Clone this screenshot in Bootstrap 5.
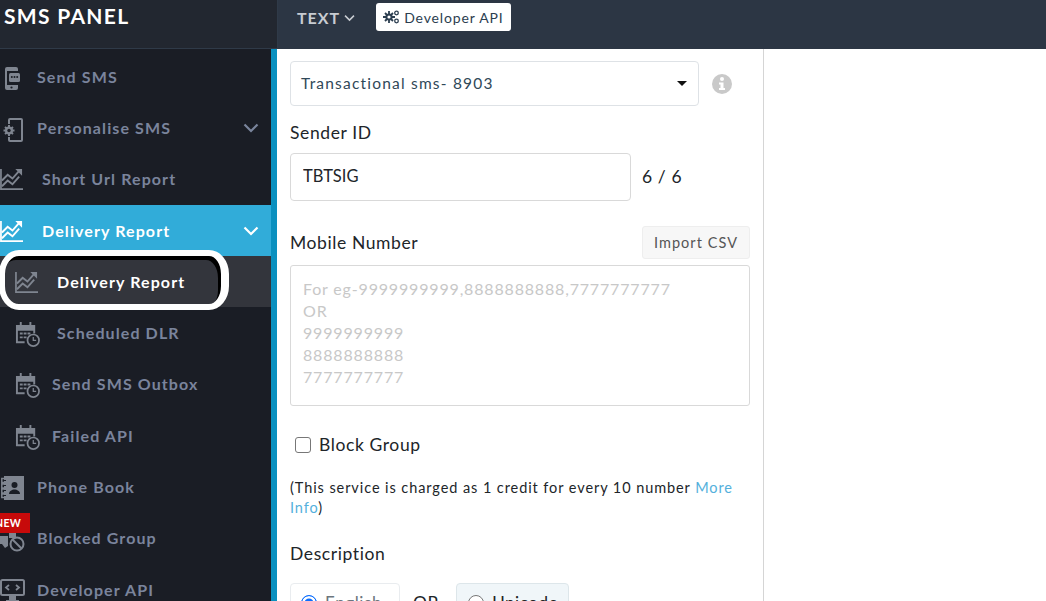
<!DOCTYPE html>
<html lang="en"><head><meta charset="utf-8"><title>SMS Panel</title>
<link rel="stylesheet" href="https://cdn.jsdelivr.net/npm/bootstrap@5.3.0/dist/css/bootstrap.min.css">
<style>
html,body{height:601px;overflow:hidden;background:#fff}
body{font-family:"Lato","Noto Sans",sans-serif;position:relative;color:#212529}
.shell{width:1046px;height:601px}
.side-col{width:271px;background:#1a1d25;padding-top:2px}
.brand-box{height:49px;background:#222730;border-bottom:1px solid #2f3a48;border-right:1px solid #2f3a48;color:#fff;font-size:21px;font-weight:700;padding:2px 0 0 4px;line-height:27px;width:278px;letter-spacing:1.3px}
.stripe{width:6px;background:#0a90bf}
.top-strip{height:49px;background:#2c3644;padding:3px 0 0 19px}
.text-tab{color:#c8ccd2;font-weight:700;font-size:16px;height:30px;letter-spacing:1px}
.api-pill{background:#fff;border-radius:3px;height:28px;font-size:14px;color:#2c3e50;padding:0 7px;margin-left:21px;letter-spacing:.85px;width:135px}
.menu-line{height:51.3px;color:#7a849c;font-size:16px;font-weight:700;letter-spacing:1.1px}
.lvl1{padding-left:37px}.lvl1b{padding-left:42px}.lvl2{padding-left:57px}.lvl2b{padding-left:52px}
.menu-line.on{background:#31acd9;color:#fff}
.menu-line.sub-on{background:#33353c;color:#fff}
.glyph{position:absolute}
.chev{margin-left:auto;margin-right:12px}
.form-wrap{width:487px;border-right:1px solid #d5d5d5;padding:12px 13px 0 13px;height:552px}
.pick{height:45px;width:409px;border:1px solid #dee2e6;border-radius:4px;color:#2f4858;font-size:15.500px;letter-spacing:1.2px;padding-left:10px}
.caret-mark{width:0;height:0;border-left:5px solid transparent;border-right:5px solid transparent;border-top:5px solid #111;margin-left:auto;margin-right:11px}
.info-mark{margin-left:13px}
.lab{font-size:17.500px;line-height:22px;color:#212529;letter-spacing:.6px}
.sender{width:341px;height:48px;border:1px solid #d9d9d9;border-radius:4px;font-size:16.500px;padding:0 12px 2px;color:#212529}
.count-txt{margin-left:11px}
.import-btn{width:108px;height:33px;background:#f7f7f7;border:1px solid #eee;border-radius:3px;font-size:14.500px;color:#555;letter-spacing:1.05px;padding:0}
.msisdn{width:460px;height:141px;border:1px solid #d9d9d9;border-radius:3px;font-size:16px;letter-spacing:.83px;line-height:22px;padding:12px 12px;resize:none;display:block;margin-top:6px}
.msisdn::placeholder{color:#c8c8c8}
.chk{width:16px;height:16px;border:1px solid #777;border-radius:3px;margin-left:5px;background:#fff}
.note{font-size:14.500px;line-height:20px;letter-spacing:.92px;width:460px;margin-top:22px}
.note a{color:#54b0dc;text-decoration:none}
.rad-box{height:40px;border:1px solid #e9ecef;border-radius:4px;padding:0 10px;font-size:17px;letter-spacing:.6px}
.rad-en{width:110px}
.rad-un{width:113px;padding-left:11px}
.rad-box.tint{background:#f0f6f9;border-color:#dde6ea;color:#222}
.rad-dot{width:16px;height:16px;border-radius:50%;border:1px solid #777;background:#fff;flex:none}
.rad-dot.sel{border:1px solid #0d6efd;box-shadow:inset 0 0 0 2.500px #fff;background:#0d6efd}
.or-word{margin:0 17px 0 13px}
.oval{position:absolute;left:-1px;top:250px;width:230px;height:60px;border-style:solid;border-color:#fff;border-width:6px 8px 6px 6px;border-radius:20px/24px;box-shadow:inset -3px 4px 0 #000}
.new-tag{position:absolute;left:-5px;top:513px;width:35px;height:20px;background:#c70a0a;color:#fff;font-size:10.500px;font-weight:700;line-height:20px;text-align:right;padding-right:9px;letter-spacing:.3px}
.hidden-clip{overflow:hidden}
.rb-row{margin-top:18px}
.sender-row{margin-top:9px}
.mobile-row{margin-top:25px}
.block-row{margin-top:28px}
.desc-row{margin-top:25px}
</style></head><body>
<svg width="0" height="0" class="position-absolute">
<symbol id="trend" viewBox="0 0 24 24"><path fill="none" stroke="currentColor" stroke-width="1.800" d="M1 1v21h23"/><path fill="none" stroke="currentColor" stroke-width="2" d="M2 13l6-6 5 4 7-8M2 19l6-6 5 4 7-8"/><path fill="currentColor" d="M16 1h7v7z"/></symbol>
<symbol id="calclk" viewBox="0 0 26 26"><path fill="currentColor" d="M1 3h4V0h2v3h8V0h2v3h4v9h-2V9H3v11h7v2H1z"/><path fill="currentColor" d="M5 11h3v2H5zm4 0h3v2H9zm4 0h3v2h-3zM5 15h3v2H5zm4 0h3v2H9z"/><circle cx="19" cy="19" r="6" fill="none" stroke="currentColor" stroke-width="1.800"/><path fill="none" stroke="currentColor" stroke-width="1.300" d="M19 15.500V19h3"/></symbol>
<symbol id="chv" viewBox="0 0 16 10"><path fill="none" stroke="currentColor" stroke-width="2.200" d="M1.500 1.500L8 8l6.500-6.500"/></symbol>
</svg>
<div class="shell d-flex flex-column">
<div class="d-flex flex-shrink-0">
<div class="brand-box flex-shrink-0">SMS PANEL</div>
<div class="top-strip flex-grow-1 d-flex align-items-start">
<span class="text-tab d-flex align-items-center gap-1">TEXT <svg width="11" height="8"><use href="#chv"/></svg></span>
<span class="api-pill d-flex align-items-center gap-1"><svg width="17" height="14" viewBox="0 0 17 14"><path stroke="#2c3e50" stroke-width="1.800" d="M6 1v12M0 7h12M2 3l8 8M10 3l-8 8"/><circle cx="6" cy="7" r="3.600" fill="#2c3e50"/><circle cx="6" cy="7" r="1.600" fill="#fff"/><circle cx="13.500" cy="3" r="1.800" fill="none" stroke="#2c3e50" stroke-width="1.300"/><circle cx="13.500" cy="11" r="1.800" fill="none" stroke="#2c3e50" stroke-width="1.300"/></svg> Developer API</span>
</div>
</div>
<div class="d-flex flex-grow-1 hidden-clip">
<div class="side-col flex-shrink-0 position-relative">
<div class="menu-line lvl1 d-flex align-items-center">Send SMS<svg class="glyph" style="left:5px;top:18px" width="15" height="23" viewBox="0 0 15 23"><path fill="#7f8590" d="M2 0h9a2 2 0 0 1 2 2v2H2v14h11v3a2 2 0 0 1-2 2H2a2 2 0 0 1-2-2V2a2 2 0 0 1 2-2z"/><rect x="4" y="6" width="11" height="9" rx="1.500" fill="#7f8590"/><circle cx="6.800" cy="10" r="1" fill="#1a1d25"/><circle cx="9.500" cy="10" r="1" fill="#1a1d25"/><circle cx="12.200" cy="10" r="1" fill="#1a1d25"/><circle cx="6.500" cy="20.500" r="1.100" fill="#1a1d25"/></svg></div>
<div class="menu-line lvl1 d-flex align-items-center">Personalise SMS<svg class="chev" width="16" height="10"><use href="#chv"/></svg><svg class="glyph" style="left:3px;top:69px" width="20" height="24" viewBox="0 0 20 24"><path fill="none" stroke="#7f8590" stroke-width="2" d="M6 6V2a1 1 0 0 1 1-1h11a1 1 0 0 1 1 1v20a1 1 0 0 1-1 1H7a1 1 0 0 1-1-1v-3"/><path stroke="#7f8590" stroke-width="2" d="M6 7v11M.500 12.500h11M2 9l8 7M10 9l-8 7"/><circle cx="6" cy="12.500" r="4" fill="#7f8590"/><circle cx="6" cy="12.500" r="1.700" fill="#1a1d25"/></svg></div>
<div class="menu-line lvl1b d-flex align-items-center">Short Url Report<svg class="glyph" style="left:0;top:119px;color:#7f8590" width="23" height="23"><use href="#trend"/></svg></div>
<div class="menu-line on lvl1b d-flex align-items-center">Delivery Report<svg class="chev" width="16" height="10"><use href="#chv"/></svg><svg class="glyph" style="left:0;top:171px;color:#fff" width="23" height="23"><use href="#trend"/></svg></div>
<div class="menu-line sub-on lvl2 d-flex align-items-center">Delivery Report<svg class="glyph" style="left:15px;top:222px;color:#7f8590" width="23" height="23"><use href="#trend"/></svg></div>
<div class="menu-line lvl2 d-flex align-items-center">Scheduled DLR<svg class="glyph" style="left:15px;top:273px;color:#7f8590" width="25" height="25"><use href="#calclk"/></svg></div>
<div class="menu-line lvl2b d-flex align-items-center">Send SMS Outbox<svg class="glyph" style="left:15px;top:324px;color:#7f8590" width="25" height="25"><use href="#calclk"/></svg></div>
<div class="menu-line lvl2b d-flex align-items-center">Failed API<svg class="glyph" style="left:15px;top:376px;color:#7f8590" width="25" height="25"><use href="#calclk"/></svg></div>
<div class="menu-line lvl1 d-flex align-items-center">Phone Book<svg class="glyph" style="left:1px;top:427px" width="23" height="24" viewBox="0 0 23 24"><rect x="3" y="0" width="20" height="24" fill="#7f8590"/><path fill="none" stroke="#1a1d25" stroke-width="1" d="M5 4.500H3M5 9.500H3M5 14.500H3M5 19.500H3"/><path fill="none" stroke="#7f8590" stroke-width="1.500" d="M3 2.500H.800v4H3M3 8H.800v4H3M3 13H.800v4H3M3 18H.800v3.500H3"/><circle cx="13.500" cy="9" r="3" fill="#1a1d25"/><path fill="#1a1d25" d="M8 18c0-3 3-4.500 5.500-4.500s5.500 1.500 5.500 4.500z"/></svg></div>
<div class="menu-line lvl1 d-flex align-items-center">Blocked Group<svg class="glyph" style="left:0;top:480px" width="25" height="24" viewBox="0 0 25 24"><path fill="#7f8590" d="M0 7h8v10l-3 2-3-4H0zM9 4h7v5H9z"/><circle cx="17" cy="15" r="6.500" fill="#1a1d25" stroke="#7f8590" stroke-width="2"/><path stroke="#7f8590" stroke-width="2" d="M12.500 10.500l9 9"/></svg></div>
<div class="menu-line lvl1 d-flex align-items-center">Developer API<svg class="glyph" style="left:0;top:530px" width="25" height="23" viewBox="0 0 25 23"><rect x="1" y="1" width="23" height="15" rx="1.500" fill="none" stroke="#7f8590" stroke-width="2"/><path fill="none" stroke="#7f8590" stroke-width="1.800" d="M9 6l-3 2.500L9 11M16 6l3 2.500L16 11"/><path fill="#7f8590" d="M9 17h7v4h3v2H6v-2h3z"/></svg></div>
</div>
<div class="stripe flex-shrink-0"></div>
<div class="form-wrap flex-shrink-0">
<div class="d-flex align-items-center">
<div class="pick d-flex align-items-center flex-shrink-0">Transactional sms- 8903<span class="caret-mark"></span></div>
<svg class="info-mark" width="20" height="20" viewBox="0 0 20 20"><circle cx="10" cy="10" r="10" fill="#c9c9c9"/><circle cx="10" cy="5" r="2" fill="#fff"/><path fill="#fff" d="M7 8.500h4.500V14H13v2H7v-2h1.500v-3.500H7z"/></svg>
</div>
<div class="lab mt-3">Sender ID</div>
<div class="d-flex align-items-center sender-row"><input class="sender" value="TBTSIG" aria-label="Sender ID"><span class="count-txt lab">6 / 6</span></div>
<div class="d-flex align-items-center justify-content-between mobile-row"><span class="lab">Mobile Number</span><button class="import-btn" type="button">Import CSV</button></div>
<textarea class="msisdn" aria-label="Mobile Number" placeholder="For eg-9999999999,8888888888,7777777777
OR
9999999999
8888888888
7777777777"></textarea>
<div class="d-flex align-items-center gap-2 block-row"><span class="chk"></span><span class="lab">Block Group</span></div>
<p class="note mb-0">(This service is charged as 1 credit for every 10 number <a href="#">More Info</a>)</p>
<div class="lab desc-row">Description</div>
<div class="d-flex align-items-center rb-row"><span class="rad-box rad-en d-flex align-items-center gap-2"><span class="rad-dot sel"></span><span class="text-secondary">English</span></span><span class="lab or-word">OR</span><span class="rad-box rad-un tint d-flex align-items-center gap-2"><span class="rad-dot"></span>Unicode</span></div>
</div>
</div>
</div>
<div class="new-tag">NEW</div>
<div class="oval"></div>
<script src="https://cdn.jsdelivr.net/npm/bootstrap@5.3.0/dist/js/bootstrap.bundle.min.js"></script>
</body></html>
